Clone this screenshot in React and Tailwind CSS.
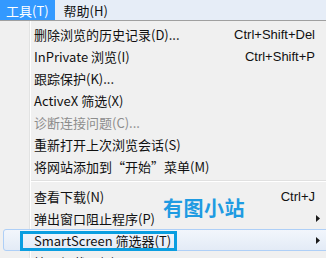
import React from 'react'

const items = [
  { label: '删除浏览的历史记录(D)...', key: 'Ctrl+Shift+Del' },
  { label: 'InPrivate 浏览(I)', key: 'Ctrl+Shift+P' },
  { label: '跟踪保护(K)...' },
  { label: 'ActiveX 筛选(X)' },
  { label: '诊断连接问题(C)...', disabled: true },
  { label: '重新打开上次浏览会话(S)' },
  { label: '将网站添加到“开始”菜单(M)' },
  { sep: true },
  { label: '查看下载(N)', key: 'Ctrl+J' },
  { label: '弹出窗口阻止程序(P)', sub: true },
  { label: 'SmartScreen 筛选器(T)', sub: true, active: true },
  { label: '管理加载项(A)' },
]

function Arrow() {
  return (
    <svg width="4" height="7" viewBox="0 0 4 7" className="shrink-0">
      <path d="M0 0L4 3.5L0 7Z" fill="#1a1a1a" />
    </svg>
  )
}

export default function App() {
  return (
    <div className="relative w-[326px] h-[258px] overflow-hidden bg-[#f0f0f0] text-[13px] leading-none text-[#111] font-['Noto_Sans_CJK_SC','Noto_Sans',sans-serif]">
      <div className="flex h-[21px] items-stretch bg-[#e6edf7] border-b border-[#a0a0a0]">
        <div className="flex items-center px-[6px] bg-[#3399ff] text-white">工具(T)</div>
        <div className="flex items-center px-[9px]">帮助(H)</div>
      </div>

      <div className="relative pt-[2px]">
        <div className="absolute left-[29px] top-0 bottom-0 w-[2px] border-l border-[#e2e3e3] bg-white" />
        {items.map((it, i) =>
          it.sep ? (
            <div key={i} className="relative h-[8px] flex items-center pl-[31px]">
              <div className="w-full h-[2px] border-t border-[#e0e0e0] bg-white" />
            </div>
          ) : (
            <div key={i} className="relative h-[22px]">
              {it.active && (
                <div className="absolute left-[3px] right-[-4px] top-0 bottom-0 rounded-[3px] border border-[#aecff7] bg-gradient-to-b from-[#f2f6fc] to-[#e3ebf6]" />
              )}
              <div
                className={
                  'relative h-full flex items-center justify-between pl-[34px] pr-[11px] ' +
                  (it.disabled ? 'text-[#8d8d8d]' : '')
                }
              >
                <span className="whitespace-nowrap">{it.label}</span>
                {it.key && <span className="whitespace-nowrap font-['Liberation_Sans',sans-serif] text-[13px]">{it.key}</span>}
                {it.sub && <span className="-mr-[5px]"><Arrow /></span>}
              </div>
            </div>
          )
        )}
      </div>

      <div className="absolute left-[163px] top-[198px] text-[20px] font-bold text-[#1e9be2] tracking-[0.5px]">有图小站</div>
      <div className="absolute left-[20px] top-[231px] w-[157px] h-[20px] border-[3px] border-[#0a9ee0]" />
    </div>
  )
}
